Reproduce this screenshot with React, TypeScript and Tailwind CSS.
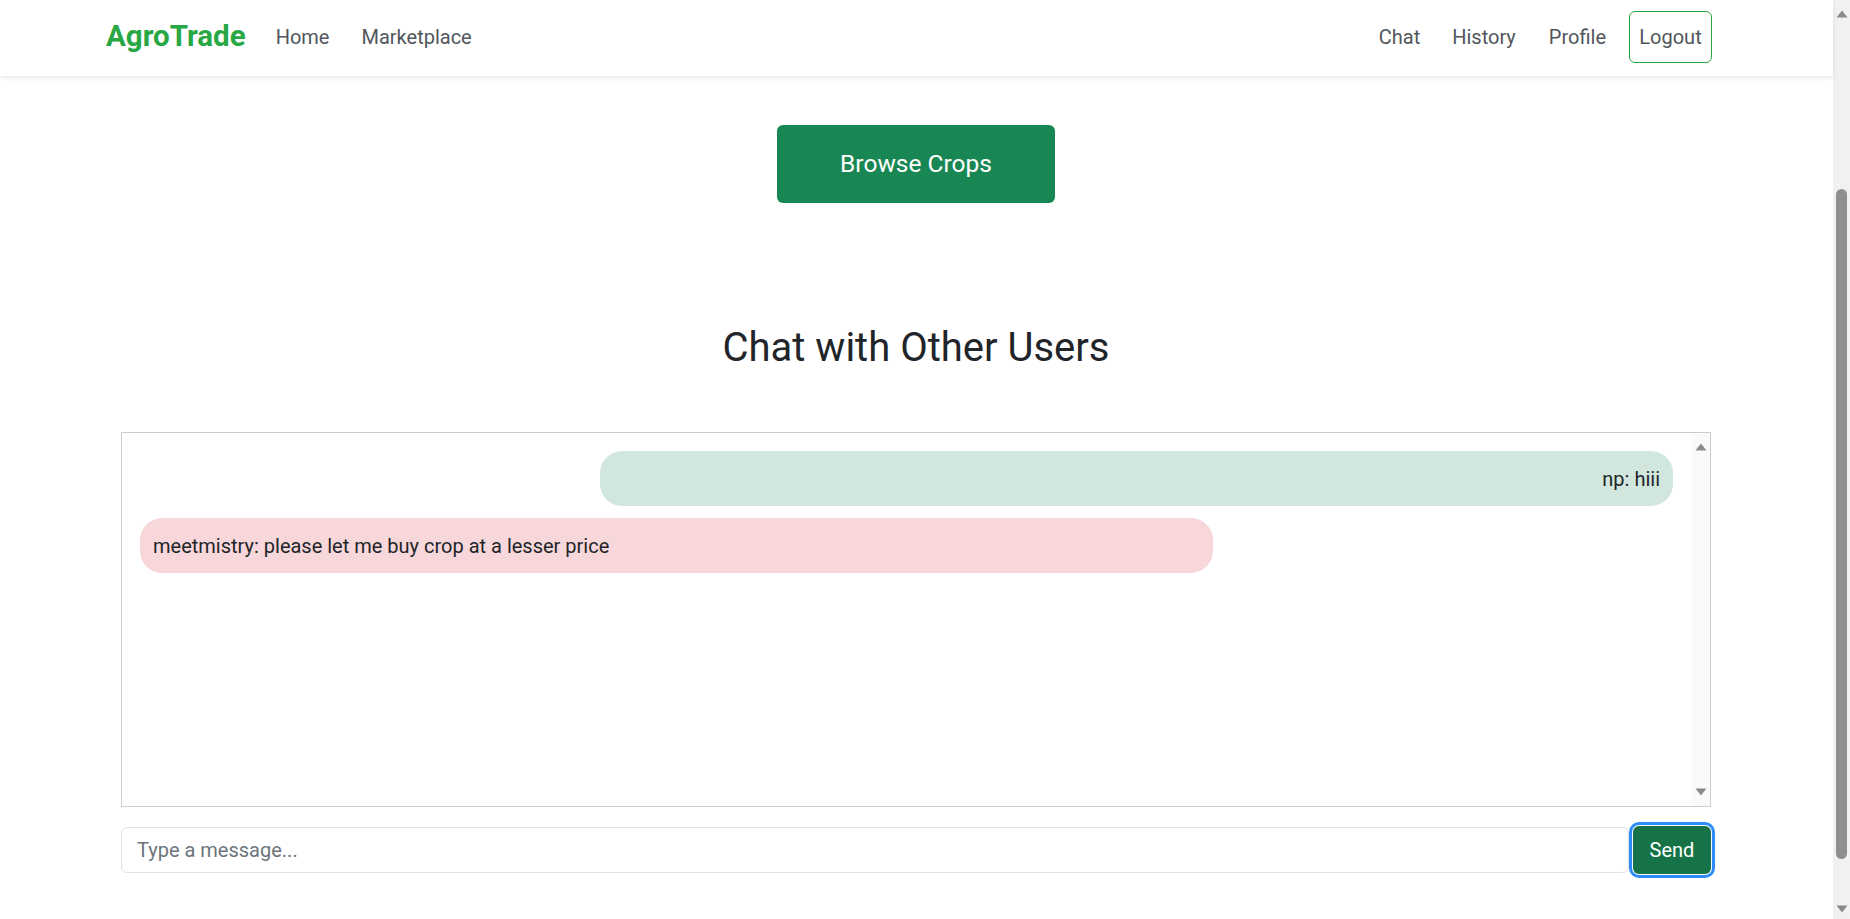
import React from "react";

function ArrowUp() {
  return (
    <svg width="12" height="8" viewBox="0 0 12 8" className="block">
      <path d="M6 0.5 L11.5 7.5 L0.5 7.5 Z" fill="#8a8a8a" />
    </svg>
  );
}

function ArrowDown() {
  return (
    <svg width="12" height="8" viewBox="0 0 12 8" className="block">
      <path d="M0.5 0.5 L11.5 0.5 L6 7.5 Z" fill="#8a8a8a" />
    </svg>
  );
}

export default function App() {
  return (
    <div className="flex h-screen w-full overflow-hidden bg-white font-['Roboto',_sans-serif] text-[20px] text-[#212529]">
      {/* Page column */}
      <div className="flex min-w-0 flex-1 flex-col">
        {/* Navbar */}
        <nav className="relative z-10 flex h-[76px] shrink-0 items-center justify-between bg-white pb-[2px] pl-[106px] pr-[121px] shadow-[0_2px_5px_rgba(0,0,0,0.09)]">
          <div className="flex items-center">
            <span className="text-[29.5px] font-bold leading-none text-[#28a745]">AgroTrade</span>
            <a className="ml-[30px] text-[20px] text-[#51565c]">Home</a>
            <a className="ml-[32px] text-[20px] text-[#51565c]">Marketplace</a>
          </div>
          <div className="flex items-center">
            <a className="text-[20px] text-[#51565c]">Chat</a>
            <a className="ml-[32px] text-[20px] text-[#51565c]">History</a>
            <a className="ml-[33px] text-[20px] text-[#51565c]">Profile</a>
            <button className="ml-[23px] flex h-[52px] w-[83px] items-center justify-center rounded-[6px] border border-[#28a745] text-[20px] text-[#51565c]">
              Logout
            </button>
          </div>
        </nav>

        {/* Content */}
        <main className="pl-[121px] pr-[122px] pt-[49px]">
          <div className="flex justify-center">
            <button className="flex h-[78px] w-[278px] items-center justify-center rounded-[6px] bg-[#198754] text-[24.5px] text-white">
              Browse Crops
            </button>
          </div>

          <h2 className="mt-[121px] text-center text-[40px] font-normal leading-[48px] text-[#212529]">
            Chat with Other Users
          </h2>

          <div className="mt-[60px] flex h-[375px] border border-[#cccccc]">
            <div className="flex min-w-0 flex-1 flex-col gap-[12px] pb-[18px] pl-[18px] pr-[19px] pt-[18px]">
              <div className="w-[70%] self-end rounded-[22px] bg-[#d1e7dd] px-[13px] py-[12.5px] text-right leading-[30px]">
                np: hiii
              </div>
              <div className="w-[70%] self-start rounded-[22px] bg-[#f8d7da] px-[13px] py-[12.5px] leading-[30px]">
                meetmistry: please let me buy crop at a lesser price
              </div>
            </div>
            {/* inner scrollbar track */}
            <div className="flex w-[18px] shrink-0 flex-col items-center justify-between bg-[#fafafa] py-[10px]">
              <ArrowUp />
              <ArrowDown />
            </div>
          </div>

          <div className="mt-[19px] flex items-center">
            <input
              className="h-[46px] flex-1 rounded-[6px] border border-[#dee2e6] bg-white px-[15px] text-[20px] text-[#212529] outline-none placeholder:text-[#6c757d]"
              placeholder="Type a message..."
            />
            <button className="ml-[4px] flex h-[48px] w-[78px] items-center justify-center rounded-[6px] bg-[#157347] text-[20px] text-white shadow-[0_0_0_1px_#ffffff,0_0_0_4px_#2d8cf9]">
              Send
            </button>
          </div>
        </main>
      </div>

      {/* Page scrollbar */}
      <div className="flex h-full w-[17px] shrink-0 flex-col items-center bg-[#f1f1f1]">
        <div className="mt-[10px]">
          <ArrowUp />
        </div>
        <div className="mt-[171px] h-[670px] w-[11px] rounded-[6px] bg-[#8f8f8f]" />
        <div className="flex-1" />
        <div className="mb-[6px]">
          <ArrowDown />
        </div>
      </div>
    </div>
  );
}
